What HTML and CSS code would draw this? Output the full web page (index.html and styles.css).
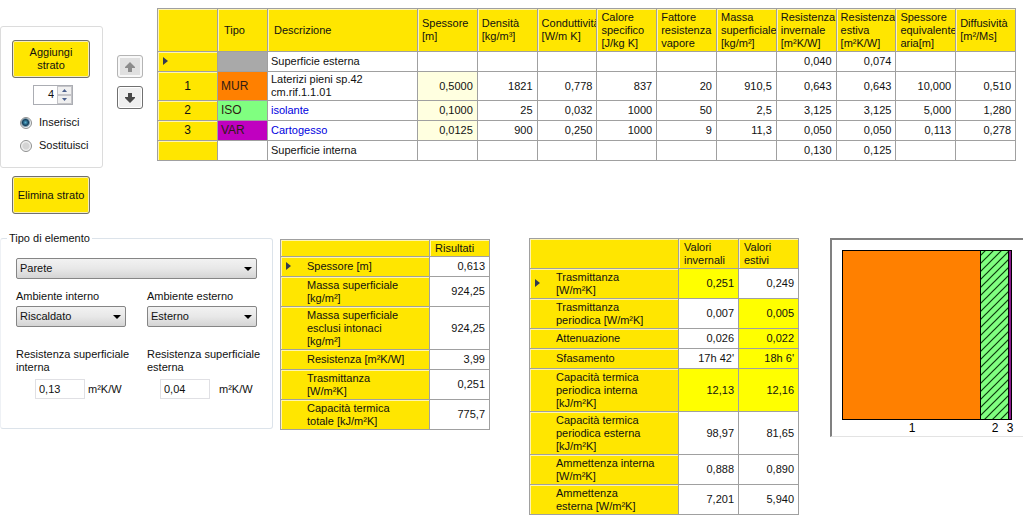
FILE: index.html
```html
<!DOCTYPE html>
<html lang="it">
<head>
<meta charset="utf-8">
<title>Stratigrafia</title>
<link rel="stylesheet" href="styles.css">
</head>
<body>
<main class="page">
  <section class="top">
    <div class="side">
      <div class="add-box">
        <button class="btn" type="button">Aggiungi<br>strato</button>
        <div class="spinner">
          <input type="number" value="4" aria-label="Posizione strato">
          <div class="spin-buttons">
            <button type="button" aria-label="Aumenta"><svg width="5" height="3" viewBox="0 0 5 3"><path d="M0 3L2.500 0L5 3Z"/></svg></button>
            <button type="button" aria-label="Diminuisci"><svg width="5" height="3" viewBox="0 0 5 3"><path d="M0 0L2.500 3L5 0Z"/></svg></button>
          </div>
        </div>
        <label class="radio"><input type="radio" name="mode" checked>Inserisci</label>
        <label class="radio"><input type="radio" name="mode">Sostituisci</label>
      </div>
      <button class="btn remove" type="button">Elimina strato</button>
    </div>
    <div class="move">
      <button class="move-btn" type="button" disabled aria-label="Sposta su"><svg width="12" height="12" viewBox="0 0 12 12"><path d="M6 1L11 6V7H8V11H4V7H1V6Z"/></svg></button>
      <button class="move-btn" type="button" aria-label="Sposta giù"><svg width="12" height="12" viewBox="0 0 12 12"><path d="M6 11L11 6V5H8V1H4V5H1V6Z"/></svg></button>
    </div>
    <div class="layers-wrap">
      <table class="grid layers">
        <colgroup><col class="c-index"><col class="c-type"><col class="c-desc"><col span="10"></colgroup>
        <thead>
          <tr>
            <th></th><th class="wide-head">Tipo</th><th class="wide-head">Descrizione</th><th>Spessore<br>[m]</th><th>Densità<br>[kg/m³]</th><th>Conduttività<br>[W/m K]</th><th>Calore<br>specifico<br>[J/kg K]</th><th>Fattore<br>resistenza<br>vapore</th><th>Massa<br>superficiale<br>[kg/m²]</th><th>Resistenza<br>invernale<br>[m²K/W]</th><th>Resistenza<br>estiva<br>[m²K/W]</th><th>Spessore<br>equivalente<br>aria[m]</th><th>Diffusività<br>[m²/Ms]</th>
          </tr>
        </thead>
        <tbody>
          <tr><th class="mark"><svg width="5" height="8" viewBox="0 0 5 8"><path d="M0 0L5 4L0 8Z"/></svg></th><td class="t-none"></td><td class="text">Superficie esterna</td><td></td><td></td><td></td><td></td><td></td><td></td><td>0,040</td><td>0,074</td><td></td><td></td></tr>
          <tr class="tall"><th class="num">1</th><td class="type t-mur">MUR</td><td class="text">Laterizi pieni sp.42<br>cm.rif.1.1.01</td><td class="edit">0,5000</td><td>1821</td><td>0,778</td><td>837</td><td>20</td><td>910,5</td><td>0,643</td><td>0,643</td><td>10,000</td><td>0,510</td></tr>
          <tr><th class="num">2</th><td class="type t-iso">ISO</td><td class="text blue">isolante</td><td class="edit">0,1000</td><td>25</td><td>0,032</td><td>1000</td><td>50</td><td>2,5</td><td>3,125</td><td>3,125</td><td>5,000</td><td>1,280</td></tr>
          <tr><th class="num">3</th><td class="type t-var">VAR</td><td class="text blue">Cartogesso</td><td class="edit">0,0125</td><td>900</td><td>0,250</td><td>1000</td><td>9</td><td>11,3</td><td>0,050</td><td>0,050</td><td>0,113</td><td>0,278</td></tr>
          <tr><th></th><td></td><td class="text">Superficie interna</td><td></td><td></td><td></td><td></td><td></td><td></td><td>0,130</td><td>0,125</td><td></td><td></td></tr>
        </tbody>
      </table>
    </div>
  </section>

  <section class="bottom">
    <fieldset class="element">
      <legend>Tipo di elemento</legend>
      <div class="select"><select aria-label="Tipo di elemento"><option>Parete</option></select></div>
      <div class="pair">
        <div class="col">
          <label for="amb-int">Ambiente interno</label>
          <div class="select"><select id="amb-int"><option>Riscaldato</option></select></div>
          <label class="res" for="res-int">Resistenza superficiale<br>interna</label>
          <div class="value in"><input id="res-int" type="text" value="0,13"><span>m²K/W</span></div>
        </div>
        <div class="col">
          <label for="amb-est">Ambiente esterno</label>
          <div class="select"><select id="amb-est"><option>Esterno</option></select></div>
          <label class="res" for="res-est">Resistenza superficiale<br>esterna</label>
          <div class="value out"><input id="res-est" type="text" value="0,04"><span>m²K/W</span></div>
        </div>
      </div>
    </fieldset>

    <table class="grid results">
      <colgroup><col><col class="c-val"></colgroup>
      <thead><tr><th></th><th>Risultati</th></tr></thead>
      <tbody>
        <tr class="h1"><th class="label mark"><svg width="5" height="8" viewBox="0 0 5 8"><path d="M0 0L5 4L0 8Z"/></svg>Spessore [m]</th><td>0,613</td></tr>
        <tr class="h2"><th class="label">Massa superficiale<br>[kg/m²]</th><td>924,25</td></tr>
        <tr class="h3"><th class="label">Massa superficiale<br>esclusi intonaci<br>[kg/m²]</th><td>924,25</td></tr>
        <tr class="h1"><th class="label">Resistenza [m²K/W]</th><td>3,99</td></tr>
        <tr class="h2"><th class="label">Trasmittanza<br>[W/m²K]</th><td>0,251</td></tr>
        <tr class="h2"><th class="label">Capacità termica<br>totale [kJ/m²K]</th><td>775,7</td></tr>
      </tbody>
    </table>

    <table class="grid seasons">
      <colgroup><col><col class="c-val"><col class="c-val"></colgroup>
      <thead><tr class="h2"><th></th><th>Valori<br>invernali</th><th>Valori<br>estivi</th></tr></thead>
      <tbody>
        <tr class="h2"><th class="label mark"><svg width="5" height="8" viewBox="0 0 5 8"><path d="M0 0L5 4L0 8Z"/></svg>Trasmittanza<br>[W/m²K]</th><td class="hot">0,251</td><td>0,249</td></tr>
        <tr class="h2"><th class="label">Trasmittanza<br>periodica [W/m²K]</th><td>0,007</td><td class="hot">0,005</td></tr>
        <tr class="h1"><th class="label">Attenuazione</th><td>0,026</td><td class="hot">0,022</td></tr>
        <tr class="h1"><th class="label">Sfasamento</th><td>17h 42'</td><td class="hot">18h 6'</td></tr>
        <tr class="h3"><th class="label">Capacità termica<br>periodica interna<br>[kJ/m²K]</th><td class="hot">12,13</td><td class="hot">12,16</td></tr>
        <tr class="h3"><th class="label">Capacità termica<br>periodica esterna<br>[kJ/m²K]</th><td>98,97</td><td>81,65</td></tr>
        <tr class="h2"><th class="label">Ammettenza interna<br>[W/m²K]</th><td>0,888</td><td>0,890</td></tr>
        <tr class="h2"><th class="label">Ammettenza<br>esterna [W/m²K]</th><td>7,201</td><td>5,940</td></tr>
      </tbody>
    </table>

    <div class="section-view">
      <svg width="180" height="184" viewBox="0 0 180 184" role="img" aria-label="Sezione della parete">
        <defs>
          <pattern id="hatch" width="8" height="8" patternUnits="userSpaceOnUse">
            <rect width="8" height="8" fill="#80ff80"/>
            <path d="M-2 2L2 -2M0 8L8 0M6 10L10 6" stroke="#0a3a0a" stroke-width="1.200"/>
          </pattern>
        </defs>
        <g stroke="#000">
          <rect x="0.500" y="0.500" width="138" height="169" fill="#ff8000"/>
          <rect x="138.500" y="0.500" width="28" height="169" fill="url(#hatch)"/>
          <rect x="166.500" y="0.500" width="3" height="169" fill="#8a1a8a"/>
        </g>
        <g class="layer-no" text-anchor="middle">
          <text x="70" y="182">1</text><text x="153" y="182">2</text><text x="168" y="182">3</text>
        </g>
      </svg>
    </div>
  </section>
</main>
</body>
</html>
```
FILE: styles.css
```css
* { box-sizing: border-box; }

body {
  margin: 0;
  background: #fff;
  color: #111;
  font: 11px/13px "Liberation Sans", Arial, sans-serif;
}

button, input, select { font: inherit; color: inherit; margin: 0; }

.page { padding-top: 8px; }

.top { display: flex; align-items: flex-start; padding-right: 7px; }

/* Left controls */
.side { width: 103px; margin-top: 18px; }

.add-box {
  display: flex;
  flex-direction: column;
  align-items: flex-start;
  height: 142px;
  padding: 13px 0 0 11px;
  border: 1px solid #dcdcdc;
  border-radius: 3px;
}

.btn {
  width: 78px;
  height: 38px;
  padding: 0;
  line-height: 13px;
  text-align: center;
  background: #ffe600;
  border: 1px solid #707070;
  border-radius: 3px;
  box-shadow: inset 0 0 0 1px #f4ecb8;
}

.remove { display: block; margin: 8px 0 0 12px; }

.spinner {
  display: flex;
  width: 40px;
  height: 20px;
  margin: 7px 0 0 21px;
  border: 1px solid #abadb3;
}

.spinner input {
  flex: 1;
  min-width: 0;
  padding: 0 3px 2px 0;
  border: 0;
  text-align: right;
  appearance: textfield;
  -moz-appearance: textfield;
}

.spinner input::-webkit-inner-spin-button { appearance: none; margin: 0; }

.spin-buttons { display: flex; flex-direction: column; width: 15px; }

.spin-buttons button {
  display: flex;
  flex: 1;
  align-items: center;
  justify-content: center;
  padding: 0;
  background: #f0f0f0;
  border: 1px solid #c4c4c8;
}

.spin-buttons svg { fill: #4b5f8c; }

.radio {
  display: flex;
  align-items: center;
  gap: 7px;
  height: 23px;
  margin-left: 8px;
}

.spinner + .radio { margin-top: 6px; }

.radio input {
  appearance: none;
  width: 12px;
  height: 12px;
  border: 1px solid #8e8f8f;
  border-radius: 50%;
  background: radial-gradient(circle, #d4d4d4 40%, #f4f4f4 65%);
}

.radio input:checked {
  background: radial-gradient(circle at 45% 45%, #58b0d0 0, #123f5c 3px, #e8eef2 5px);
}

.move {
  display: flex;
  flex-direction: column;
  gap: 8px;
  width: 54px;
  margin-top: 47px;
  padding-left: 14px;
}

.move-btn {
  display: flex;
  align-items: center;
  justify-content: center;
  width: 26px;
  height: 23px;
  padding: 0;
  background: #efefef;
  border: 1px solid #707070;
  border-radius: 3px;
  box-shadow: inset 0 0 0 1px #fff;
}

.move-btn svg { fill: #484848; }
.move-btn:disabled { background: #e0e0e0; border-color: #b4b4b4; box-shadow: inset 0 0 0 2px #f8f8f8; }
.move-btn:disabled svg { fill: #8c8c8c; }

/* Data grids */
.layers-wrap { flex: 1; min-width: 0; }

.grid {
  border-collapse: collapse;
  table-layout: fixed;
}

.grid th, .grid td {
  padding: 0;
  border: 1px solid #a0a0a0;
  overflow: hidden;
  white-space: nowrap;
}

.grid th {
  background: #ffe600;
  box-shadow: inset 1px 1px 0 #fff4b0;
  font-weight: normal;
  text-align: left;
}

.grid td { padding-right: 4px; text-align: right; }

.grid svg { fill: #333a50; }

.layers { width: 100%; }
.layers tr { height: 20px; }
.layers thead tr { height: 43px; }
.layers .tall { height: 29px; }
.layers thead th { padding-left: 4px; }
.layers thead .wide-head { padding-left: 6px; }
.layers .c-index { width: 60px; }
.layers .c-type { width: 50px; }
.layers .c-desc { width: 150px; }
.layers .mark { padding-left: 5px; }
.layers .num { text-align: center; font-size: 12px; }
.layers .text { padding-left: 3px; text-align: left; }
.layers .type { padding-left: 3px; text-align: left; font-size: 12px; color: #301c14; }
.layers .blue { color: #0000e0; }
.layers .edit { background: #ffffe0; }
.layers .t-none { background: #a9a9a9; }
.layers .t-mur { background: #ff8000; }
.layers .t-iso { background: #80ff80; }
.layers .t-var { background: #c000c0; }

.c-val { width: 60px; }
.h1 { height: 20px; }
.h2 { height: 30px; }
.h3 { height: 43px; }
.grid .label { padding-left: 26px; }
.grid .label.mark { position: relative; }
.label.mark svg { position: absolute; left: 5px; top: 50%; margin-top: -5px; }
.results thead th, .seasons thead th { padding-left: 5px; }
.results thead tr { height: 17px; }
.grid .hot { background: #ffff00; }

/* Lower area */
.bottom {
  display: grid;
  grid-template-columns: minmax(0, 280fr) minmax(0, 249fr) minmax(0, 301fr) minmax(0, 193fr);
  align-items: start;
  margin-top: 18px;
}

.results { width: calc(100% - 39px); margin-top: 7px; }
.seasons { width: calc(100% - 31px); margin-top: 6px; }

.element {
  min-width: 0;
  margin: 0 7px 0 0;
  height: 197px;
  padding: 13px 15px 0;
  border: 1px solid #dce3ea;
  border-left-color: #eef1f5;
  border-radius: 3px;
}

.element legend { margin-left: -9px; padding: 0 2px; }

.select { position: relative; }

.select select {
  display: block;
  width: 100%;
  height: 21px;
  padding: 0 18px 0 3px;
  appearance: none;
  background: linear-gradient(#f2f2f2, #e8e8e8 50%, #d4d4d4);
  border: 1px solid #858585;
  border-radius: 2px;
}

.select::after {
  content: "";
  position: absolute;
  top: 9px;
  right: 5px;
  border: 4px solid transparent;
  border-top-color: #000;
  border-bottom: 0;
  pointer-events: none;
}

.pair {
  display: grid;
  grid-template-columns: repeat(2, minmax(0, 1fr));
  gap: 21px;
  margin-top: 11px;
}

.col label { display: block; white-space: nowrap; }
.col .select { margin-top: 3px; }
.col .res { margin-top: 21px; }

.value { display: flex; align-items: center; margin-top: 5px; }
.value.in { padding-left: 19px; gap: 3px; }
.value.out { padding-left: 13px; gap: 9px; }

.value input {
  width: 50px;
  height: 20px;
  padding: 0 3px;
  border: 1px solid #e0e0e4;
}

.section-view {
  height: 199px;
  margin-top: 6px;
  padding: 10px 0 0 10px;
  overflow: hidden;
  border-top: 2px solid #808080;
  border-left: 2px solid #808080;
  border-bottom: 1px solid #e3e3e3;
}

.section-view svg { display: block; }
.layer-no { font-size: 12px; }
```
